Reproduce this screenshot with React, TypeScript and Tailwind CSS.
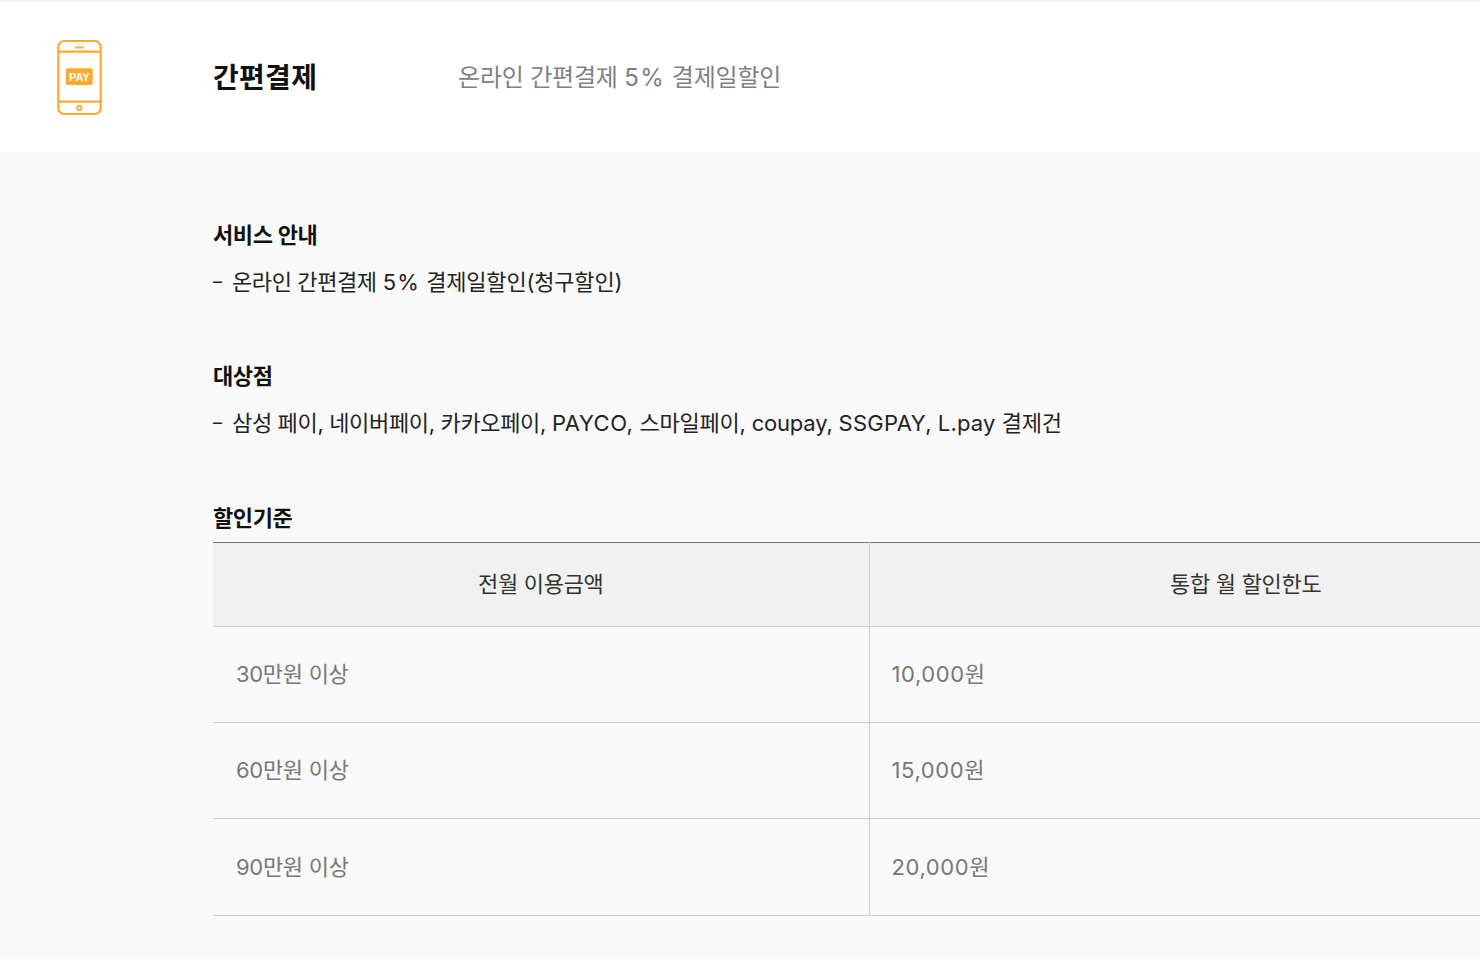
const font = "font-['Inter','Noto_Sans_CJK_KR',sans-serif]";

function PhoneIcon() {
  return (
    <svg width="46" height="78" viewBox="0 0 46 78" fill="none" stroke="#ffa92f" strokeWidth="2.2">
      <rect x="1.3" y="3" width="42.4" height="73" rx="6" />
      <line x1="1.3" y1="13.7" x2="43.7" y2="13.7" />
      <line x1="1.3" y1="63.7" x2="43.7" y2="63.7" />
      <line x1="18" y1="9.5" x2="27" y2="9.5" strokeWidth="2" />
      <circle cx="22.3" cy="70" r="2.2" strokeWidth="1.8" />
      <rect x="9" y="30.3" width="26.7" height="16.7" rx="1.5" fill="#ffa92f" stroke="none" />
      <text x="22.3" y="42.6" textAnchor="middle" fill="#fff" stroke="none" fontSize="11" fontWeight="700" fontFamily="Liberation Sans, sans-serif">PAY</text>
    </svg>
  );
}

const rows = [
  ["30만원 이상", "10,000"],
  ["60만원 이상", "15,000"],
  ["90만원 이상", "20,000"],
];

function Dash() {
  return <span className="inline-block w-[19px] align-[2px] text-[18px] leading-none">–</span>;
}

export default function App() {
  return (
    <div className={`${font} min-h-[959px] overflow-hidden bg-[#f9f9f9]`}>
      <header className="flex h-[152px] items-center border-t-2 border-[#f4f4f4] bg-white">
        <div className="ml-[57px] flex w-[156px] shrink-0"><PhoneIcon /></div>
        <h1 className="w-[245px] shrink-0 pt-[2px] text-[28px] font-bold tracking-[0.3px] text-[#111]">간편결제</h1>
        <p className="pt-[2px] text-[24px] tracking-[-0.2px] text-[#808080]">
          온라인 간편결제 <span className="tracking-[1.4px]">5%</span> 결제일할인
        </p>
      </header>
      <main className="pl-[213px] pt-[67px]">
        <section className="h-[141px]">
          <h2 className="text-[22px] leading-[32px] font-semibold tracking-[-0.4px] text-[#111]">서비스 안내</h2>
          <p className="mt-[15px] text-[22px] leading-[32px] tracking-[-0.2px] text-[#222]">
            <Dash /><span className="tracking-[-0.4px]">온라인 간편결제</span> <span className="tracking-[1.3px]">5%</span> 결제일할인(청구할인)
          </p>
        </section>
        <section className="h-[142px]">
          <h2 className="text-[22px] leading-[32px] font-semibold tracking-[-0.4px] text-[#111]">대상점</h2>
          <p className="mt-[15px] text-[22px] leading-[32px] tracking-[-0.2px] whitespace-nowrap text-[#222]">
            <Dash /><span className="tracking-[-0.35px]">삼성 페이, 네이버페이, 카카오페이,</span> <span className="tracking-[0.5px]">PAYCO,</span> 스마일페이, coupay, <span className="tracking-[0.3px]">SSGPAY,</span> <span className="tracking-[0.2px]">L.pay</span> 결제건
          </p>
        </section>
        <h2 className="text-[22px] leading-[32px] font-semibold tracking-[-0.4px] text-[#111]">할인기준</h2>
        <table className="mt-[8px] w-[1409px] table-fixed border-collapse border-t border-[#777]">
          <thead>
            <tr className="h-[84px] border-b border-[#ccc] bg-[#f1f1f1]">
              <th className="w-[656px] border-r border-[#ccc] pb-[1px] text-center text-[22px] font-normal tracking-[-0.3px] text-[#333]">전월 이용금액</th>
              <th className="pb-[1px] text-center text-[22px] font-normal tracking-[-0.3px] text-[#333]">통합 월 할인한도</th>
            </tr>
          </thead>
          <tbody>
            {rows.map(([a, b], i) => (
              <tr key={a} className={`${i === 2 ? "h-[97px]" : "h-[96px]"} border-b border-[#ccc]`}>
                <td className={`border-r border-[#ccc] pl-[23px] text-[22px] tracking-[-0.3px] text-[#777] ${i === 2 ? "pb-0" : "pb-[1px]"}`}>{a}</td>
                <td className={`pl-[22px] text-[22px] tracking-[-0.2px] text-[#777] ${i === 2 ? "pb-0" : "pb-[1px]"}`}><span className="tracking-[0.6px]">{b}</span>원</td>
              </tr>
            ))}
          </tbody>
        </table>
      </main>
    </div>
  );
}
